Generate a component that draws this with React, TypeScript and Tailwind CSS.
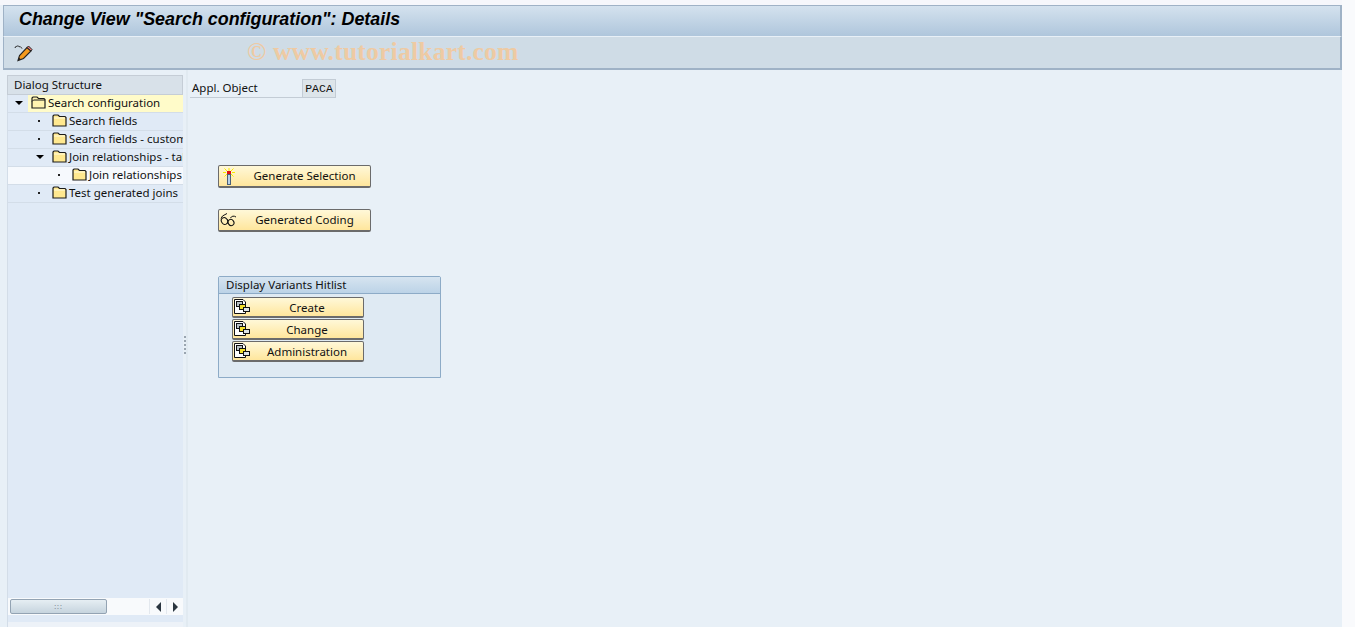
const ui = { fontFamily: '"Noto Sans", "DejaVu Sans", sans-serif' };

function Folder({ open }: { open?: boolean }) {
  return (
    <svg width="15" height="13" viewBox="0 0 15 13" className="shrink-0">
      <path d="M1 12V2L2 1H6L7.5 2.5H13L14 3.5V12Z" fill={open ? "#fff3b0" : "#ffe88f"} stroke="#1c1c1c" strokeWidth="1.2" />
      {open && <path d="M1 5.5L2.5 4H14" fill="none" stroke="#1c1c1c" strokeWidth="1" />}
      {!open && <path d="M2 4H13" stroke="#fffbe0" strokeWidth="1" />}
    </svg>
  );
}

function Arrow() {
  return <span className="h-0 w-0 shrink-0 border-x-[4px] border-t-[4px] border-x-transparent border-t-black" />;
}

function Dot() {
  return <span className="h-[2px] w-[2px] shrink-0 bg-[#222]" />;
}

function TreeRow({
  indent,
  node,
  labelIndent,
  label,
  open,
  rowClass,
  labelClass,
}: {
  indent: string;
  node: "arrow" | "dot";
  labelIndent: string;
  label: string;
  open?: boolean;
  rowClass?: string;
  labelClass?: string;
}) {
  return (
    <div className={`flex h-[18px] items-stretch overflow-hidden whitespace-nowrap border-b border-[#d3dde8] ${rowClass ?? ""}`}>
      <div className={`flex shrink-0 items-center pb-[2px] ${indent}`}>
        {node === "arrow" ? <Arrow /> : <Dot />}
      </div>
      <div className={`flex min-w-0 flex-1 items-center gap-[2px] pb-[2px] ${labelIndent} ${labelClass ?? ""}`}>
        <Folder open={open} />
        <span className="text-[11.5px] leading-none text-[#111]">{label}</span>
      </div>
    </div>
  );
}

function WandIcon() {
  return (
    <svg width="14" height="17" viewBox="0 0 14 17" className="shrink-0">
      <path d="M7 0V3M7 6V8M1 4.5H4M10 4.5H13M2.5 0.5L5 3M11.5 0.5L9 3M2.5 8.5L5 6M11.5 8.5L9 6" stroke="#f7ea00" strokeWidth="1" />
      <rect x="5" y="3" width="4" height="3" fill="#e01010" />
      <rect x="5.5" y="6.5" width="3" height="10" fill="#b8d0e8" stroke="#4a6078" strokeWidth="1" />
    </svg>
  );
}

function GlassesIcon() {
  return (
    <svg width="17" height="14" viewBox="0 0 17 14" fill="none" className="shrink-0">
      <path d="M7 0.5L2.5 3L1 5.5M10.5 5C11.5 3 14 2.5 16 4" stroke="#111" strokeWidth="1" />
      <ellipse cx="4.5" cy="8" rx="3" ry="3.5" transform="rotate(-35 4.5 8)" stroke="#111" strokeWidth="1.1" />
      <ellipse cx="11" cy="9.5" rx="2.8" ry="3.2" transform="rotate(-35 11 9.5)" stroke="#111" strokeWidth="1.1" />
      <path d="M7 7C7.5 6.5 8 7 8.5 7.5" stroke="#111" strokeWidth="1" />
    </svg>
  );
}

function VariantIcon() {
  return (
    <svg width="16" height="16" viewBox="0 0 16 16" className="shrink-0">
      <path d="M0.5 0.5H9L11.5 3V14.5H0.5Z" fill="#fff" stroke="#111" strokeWidth="1" />
      <rect x="2.5" y="2.5" width="6" height="5" fill="#b9c2c6" stroke="#111" strokeWidth="1" />
      <rect x="5.5" y="5.5" width="6" height="5" fill="#f4e02c" stroke="#111" strokeWidth="1" />
      <rect x="9.5" y="8.5" width="6" height="4" fill="#dfe4e6" stroke="#111" strokeWidth="1" />
    </svg>
  );
}

function SapButton({ width, height, icon, label, iconBox, mt, labelPad }: { width: string; height: string; icon: React.ReactNode; label: string; iconBox: string; mt?: string; labelPad?: string }) {
  return (
    <div className={`flex items-center rounded-[2px] border border-[#6b6b6b] border-b-[2px] bg-gradient-to-b from-[#fff8d8] to-[#ffe69c] ${width} ${height} ${mt ?? ""}`}>
      <div className={`flex shrink-0 items-center ${iconBox}`}>{icon}</div>
      <span className={`flex-1 text-center text-[11.5px] leading-none text-[#111] ${labelPad ?? ""}`}>{label}</span>
    </div>
  );
}

export default function App() {
  return (
    <div className="flex h-[627px] w-[1355px] overflow-hidden bg-[#f9fafc]" style={ui}>
      <div className="flex w-[1342px] shrink-0 flex-col bg-[#e8f0f7]">
        <div className="h-[5px] bg-[#f6f7fb]" />
        <div className="ml-[3px] flex h-[31px] items-center border border-b-0 border-r-[2px] border-[#9fb2c6] bg-gradient-to-b from-[#d4e2ee] to-[#afc6dc] pb-[3px] pl-[15px]">
          <h1 className="text-[17.9px] font-bold italic leading-none text-black" style={{ fontFamily: '"Liberation Sans", sans-serif' }}>
            Change View "Search configuration": Details
          </h1>
        </div>
        <div className="ml-[3px] flex h-[34px] items-center border-x border-b-[2px] border-t border-r-[2px] border-[#9fb2c6] border-t-[#e8f0f7] bg-[#cfdce6] pl-[10px]">
          <svg width="19" height="18" viewBox="0 0 19 18" fill="none" className="shrink-0">
            <path d="M1 4C1.5 1.5 3 3 3.5 2C4 1 5 3.5 6 2.5C6.5 3.5 7.5 3 8 4.5" stroke="#222" strokeWidth="1" />
            <path d="M4 16.5L5.5 11.5L13 3.5L17 7L9.5 14.5Z" fill="#f59a1c" stroke="#222" strokeWidth="1.1" />
            <path d="M13 3.5L14.5 2L18 5.5L17 7Z" fill="#e87a7a" stroke="#222" strokeWidth="1" />
            <path d="M4 16.5L5 13.5L7 15.5Z" fill="#222" />
          </svg>
          <span className="ml-[214px] pb-[1px] text-[25.6px] font-bold leading-none tracking-[0.2px] text-[#eecaa3]" style={{ fontFamily: '"Liberation Serif", serif' }}>
            © www.tutorialkart.com
          </span>
        </div>

        <div className="flex min-h-0 flex-1">
          <aside className="ml-[7px] mt-[5px] flex w-[176px] shrink-0 flex-col bg-[#e0eaf6]">
            <div className="flex h-[20px] items-center border border-[#c5cdd6] bg-[#d8e1e9] pb-px pl-[6px] text-[11.5px] leading-none text-[#111]">Dialog Structure</div>
            <div className="flex flex-1 flex-col border-l border-[#d3dde8]">
              <TreeRow indent="w-[20px] pl-[7px]" node="arrow" labelIndent="pl-[3px]" label="Search configuration" open labelClass="bg-[#fffbc9]" />
              <TreeRow indent="w-[42px] pl-[30px]" node="dot" labelIndent="pl-[2px]" label="Search fields" />
              <TreeRow indent="w-[42px] pl-[30px]" node="dot" labelIndent="pl-[2px]" label="Search fields - customer" />
              <TreeRow indent="w-[42px] pl-[28px]" node="arrow" labelIndent="pl-[2px]" label="Join relationships - table" />
              <TreeRow indent="w-[62px] pl-[50px]" node="dot" labelIndent="pl-[2px]" label="Join relationships" rowClass="bg-[#f6f9fd]" />
              <TreeRow indent="w-[42px] pl-[30px]" node="dot" labelIndent="pl-[2px]" label="Test generated joins" />
              <div className="flex-1" />
              <div className="mb-[7px] flex h-[17px] items-center bg-[#f8fafc] pl-[2px]">
                <div className="flex h-[15px] w-[97px] items-center justify-center rounded-[2px] border border-[#93a3b3] bg-gradient-to-b from-[#e6eef3] to-[#c6d4de]">
                  <span className="text-[7px] leading-none tracking-[1px] text-[#7b8894]">:::</span>
                </div>
                <div className="flex-1" />
                <div className="flex h-[15px] w-[17px] items-center justify-center border-l border-[#e3e8ee]">
                  <span className="h-0 w-0 border-y-[5px] border-r-[5px] border-y-transparent border-r-[#2b3640]" />
                </div>
                <div className="flex h-[15px] w-[17px] items-center justify-center border-l border-[#e3e8ee]">
                  <span className="h-0 w-0 border-y-[5px] border-l-[5px] border-y-transparent border-l-[#2b3640]" />
                </div>
              </div>
              <div className="h-[5px] bg-[#edf2f8]" />
            </div>
          </aside>

          <div className="flex w-[3px] shrink-0 items-center justify-center pb-[8px]">
            <div className="flex flex-col gap-[2px]">
              {[0, 1, 2, 3, 4].map((i) => (
                <span key={i} className="h-[2px] w-[2px] bg-[#9aa5b0]" />
              ))}
            </div>
          </div>

          <main className="flex flex-1 flex-col border-l-[2px] border-[#e1eaf1] pl-[2px]">
            <div className="mt-[9px] flex h-[20px] w-[146px]">
              <div className="flex h-[19px] flex-1 items-center border-b border-[#c3ccd5] pl-[2px] text-[11.5px] leading-none text-[#111]">Appl. Object</div>
              <div className="flex h-[19px] w-[34px] items-center justify-center border border-[#c3ccd5] bg-[#dde5ea] text-[11.5px] leading-none text-[#111]" style={{ fontFamily: '"Liberation Mono", monospace' }}>
                PACA
              </div>
            </div>

            <div className="ml-[28px] flex flex-col">
              <SapButton mt="mt-[66px]" width="w-[153px]" height="h-[23px]" iconBox="w-[20px] pl-[3px]" icon={<WandIcon />} label="Generate Selection" />
              <SapButton mt="mt-[21px]" width="w-[153px]" height="h-[23px]" iconBox="w-[20px] pl-[1px]" icon={<GlassesIcon />} label="Generated Coding" />

              <section className="mt-[44px] h-[102px] w-[223px] rounded-t-[2px] border border-[#8dabc7] bg-[#dfeaf3]">
                <div className="flex h-[17px] items-center border-b border-[#8dabc7] bg-gradient-to-b from-[#d6e4f0] to-[#bcd3e7] pb-px pl-[7px] text-[11.5px] leading-none text-[#111]">Display Variants Hitlist</div>
                <div className="ml-[13px] mt-[3px] flex flex-col gap-px">
                  {["Create", "Change", "Administration"].map((label) => (
                    <SapButton key={label} width="w-[132px]" height="h-[21px]" iconBox="w-[18px] pl-px" icon={<VariantIcon />} label={label} labelPad="pt-[2px]" />
                  ))}
                </div>
              </section>
            </div>
          </main>
        </div>
      </div>
    </div>
  );
}
